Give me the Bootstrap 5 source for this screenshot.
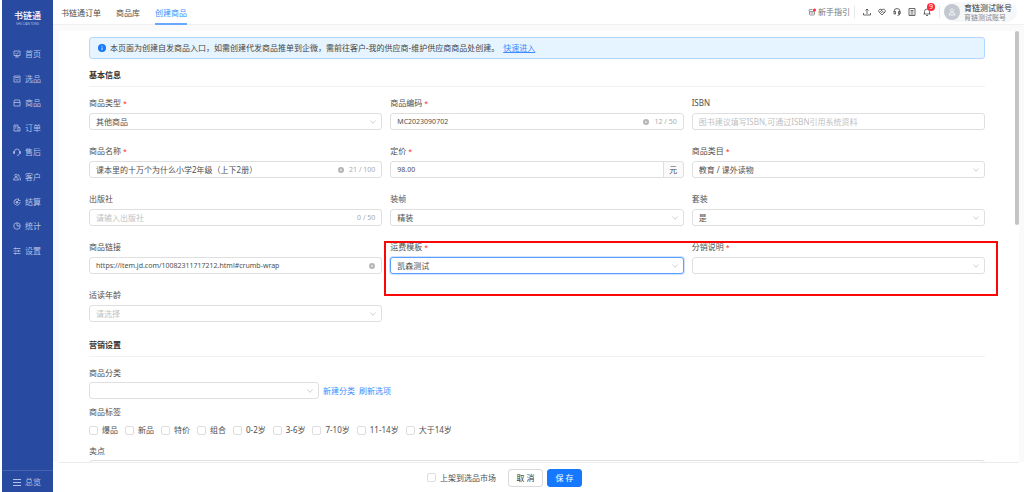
<!DOCTYPE html>
<html lang="zh-CN">
<head>
<meta charset="utf-8">
<meta name="viewport" content="width=device-width, initial-scale=1">
<title>创建商品</title>
<link href="https://cdn.jsdelivr.net/npm/bootstrap@5.3.0/dist/css/bootstrap.min.css" rel="stylesheet">
<style>
:root { --ink:#4f4f4f; --line:#dfdfdf; --brand:#1677ff; }
body { font-family:"Noto Sans","Noto Sans CJK SC",sans-serif; font-size:8px; line-height:12px; color:var(--ink); background:#fff; }
a { color:#3d8bff; text-decoration:none; }
svg { fill:none; stroke:currentColor; display:block; flex:none; }
.side { width:51px; margin-left:2px; background:#284aa0; color:#b4c2e6; }
.side a { color:inherit; gap:4px; padding-left:11px; }
.logo-box { height:42px; padding-top:10px; color:#fff; }
.logo-name { font-size:9px; line-height:12px; font-weight:500; }
.logo-sub { font-size:3px; line-height:4px; color:#b4c2e6; }
.side-menu { display:grid; grid-auto-rows:1fr; height:221px; }
.side-foot { height:22px; border-top:1px solid #4663ae; color:#d5def2; }
.topbar { height:25px; border-bottom:1px solid #f0f0f0; padding:0 7px 0 8px; }
.tabs { gap:15px; }
.tabs a { color:var(--ink); line-height:25px; height:25px; border-bottom:2px solid transparent; }
.tabs a.active { color:#3d8bff; border-color:#69a8ff; }
.guide { gap:2px; color:#777; }
.tools { gap:7px; }
.tool { background:none; border:0; padding:0; color:#444; }
.vline { width:1px; height:12px; background:#e8e8e8; }
.dot { position:absolute; left:4px; top:-5px; width:8px; height:8px; border-radius:4px; background:#ff2638; color:#fff; font-size:7px; line-height:8px; text-align:center; }
.user { background:#f6f7f9; border-radius:10px; height:20px; padding-right:5px; gap:4px; color:#333; line-height:10px; }
.user-sub { font-size:7px; line-height:9px; color:#888; }
.avatar { width:16px; height:16px; border-radius:8px; background:#c3c7cf; color:#eef0f3; }
.stage { background:#fafafa; padding:6px 5px 0 6px; }
.panel { background:#fff; }
.sheet { padding:6px 34px 0 30px; }
.tip { height:22px; border:1px solid #b3d7ff; border-radius:3px; background:#e6f4ff; padding:0 8px; gap:4px; margin-bottom:10px; color:#444; }
.tip a { text-decoration:underline; }
.sec { font-size:8px; line-height:12px; font-weight:700; color:#333; padding-bottom:5px; margin:2px 0 10px; border-bottom:1px solid #f2f2f2; }
.tip + .sec { margin-top:0; }
.fields { --bs-gutter-x:8px; }
.cell { height:48px; }
.cell label { display:block; line-height:12px; margin-bottom:4px; }
.lab { display:block; line-height:12px; margin-bottom:3px; }
.need::after { content:"*"; color:#ff2a2a; margin-left:2px; font-size:7px; line-height:1px; }
.ctl { display:flex; align-items:center; width:100%; height:17px; border:1px solid var(--line); border-radius:3px; background:#fff; color:var(--ink); font-size:8px; line-height:13px; padding:0 6px; }
.ctl input { flex:1; min-width:0; border:0; padding:0; height:15px; background:none; color:inherit; outline:0; line-height:15px; }
.ctl input::placeholder, input.ctl::placeholder { color:#bfbfbf; opacity:1; }
.latin { font-size:7px; }
select.ctl { appearance:none; background:#fff url("data:image/svg+xml,%3Csvg xmlns='http://www.w3.org/2000/svg' viewBox='0 0 6 4'%3E%3Cpath d='M.5.5 3 3.3 5.5.5' fill='none' stroke='%23bbb' stroke-width='.7'/%3E%3C/svg%3E") no-repeat right 5px center/6px 4px; }
select.empty { color:#bfbfbf; }
select.hot { border-color:#5b9fff; box-shadow:0 0 0 1px #cfe3ff; outline:0; }
.count { color:#aaa; margin-left:5px; }
.clr { width:6px; height:6px; color:#b5b5b5; }
.unit { width:21px; height:17px; padding:0; flex:none; justify-content:center; border:1px solid var(--line); background:#fafafa; font-size:8px; border-radius:3px; color:var(--ink); }
.frame { position:absolute; z-index:2; pointer-events:none; left:calc(33.333% - 4px); right:-13px; top:0; height:55px; border:2px solid #fa0808; }
.cat { max-width:230px; }
.cat-row { gap:4px; margin-bottom:7px; }
.tick { appearance:none; width:9px; height:9px; margin:0; border:1px solid #dedede; border-radius:2px; background:#fff; }
.pick { gap:4px; }
.tags { gap:7px; padding-top:3px; margin-bottom:9px; }
.bar { position:absolute; right:0; top:0; width:4px; height:194px; border-radius:2px; background:#c4c4c4; }
.foot { height:30px; background:#fff; border-top:1px solid #ececec; margin:0 5px 0 6px; padding-right:69px; }
.act { height:18px; width:35px; padding:0; font-size:8px; line-height:14px; border-radius:3px; }
.act-save { background:var(--brand); border-color:var(--brand); color:#fff; }
.act-cancel { background:#fff; border-color:#d9d9d9; color:#333; }
</style>
</head>
<body>
<div class="d-flex vh-100 overflow-hidden">
  <aside class="side d-flex flex-column flex-shrink-0">
    <div class="logo-box text-center"><div class="logo-name">书链通</div><div class="logo-sub">SHU LIAN TONG</div></div>
    <nav class="side-menu">
      <a href="#" class="d-flex align-items-center"><svg width="8" height="8" viewBox="0 0 16 16" stroke-width="1.6"><path d="M2 2h12v9H2zM4 14h8M8 11v3M5 7l2 1 4-3"/></svg>首页</a>
      <a href="#" class="d-flex align-items-center"><svg width="8" height="8" viewBox="0 0 16 16" stroke-width="1.6"><path d="M2 2h12v12H2zM4 5h8M5 8l3 3 3-3"/></svg>选品</a>
      <a href="#" class="d-flex align-items-center"><svg width="8" height="8" viewBox="0 0 16 16" stroke-width="1.6"><path d="M3 2h10l1 4v8H2V6zM2 7h12"/></svg>商品</a>
      <a href="#" class="d-flex align-items-center"><svg width="8" height="8" viewBox="0 0 16 16" stroke-width="1.6"><path d="M2 2h8v12H2zM10 7h4v7h-4M4 5h3M4 8h3"/></svg>订单</a>
      <a href="#" class="d-flex align-items-center"><svg width="8" height="8" viewBox="0 0 16 16" stroke-width="1.6"><path d="M3 10V7a5 5 0 0 1 10 0v3M1 7h2v4H1zM13 7h2v4h-2zM13 11q-1 4-5 4"/></svg>售后</a>
      <a href="#" class="d-flex align-items-center"><svg width="8" height="8" viewBox="0 0 16 16" stroke-width="1.6"><circle cx="6" cy="5" r="2.5"/><path d="M1 14q0-5 5-5t5 5zM10 3q3 0 2 4 3 2 3 7h-2"/></svg>客户</a>
      <a href="#" class="d-flex align-items-center"><svg width="8" height="8" viewBox="0 0 16 16" stroke-width="1.6"><path d="M14 8a6 6 0 1 1-3-5M11 1v4h4M5 5l3 3 3-3M5 9h6M8 8v4"/></svg>结算</a>
      <a href="#" class="d-flex align-items-center"><svg width="8" height="8" viewBox="0 0 16 16" stroke-width="1.6"><circle cx="8" cy="8" r="6.5"/><path d="M8 2v6h6"/></svg>统计</a>
      <a href="#" class="d-flex align-items-center"><svg width="8" height="8" viewBox="0 0 16 16" stroke-width="1.6"><path d="M1 3h14M1 8h14M1 13h14M5 1v4M11 6v4M5 11v4"/></svg>设置</a>
    </nav>
    <a href="#" class="side-foot d-flex align-items-center mt-auto"><svg width="8" height="8" viewBox="0 0 8 8" stroke-width="1"><path d="M0 1.5h8M0 4.5h8M0 7.5h8"/></svg>总览</a>
  </aside>

  <div class="d-flex flex-column flex-grow-1 overflow-hidden">
    <header class="topbar d-flex align-items-center justify-content-between">
      <nav class="tabs d-flex"><a href="#">书链通订单</a><a href="#">商品库</a><a href="#" class="active">创建商品</a></nav>
      <div class="d-flex align-items-center">
        <a href="#" class="guide d-flex align-items-center"><svg width="8" height="8" viewBox="0 0 16 16" stroke-width="1.6" stroke="#555"><path d="M9 3H4Q2 3 2 5t2 2h9M3 7v5q0 2 2 2h6q2 0 2-2V8M5 10h6"/><circle cx="13" cy="4" r="3" fill="#ff2638" stroke="none"/></svg>新手指引</a>
        <span class="vline mx-1"></span>
        <div class="tools d-flex align-items-center mx-1">
          <button class="tool" aria-label="上传"><svg width="8" height="8" viewBox="0 0 16 16" stroke-width="1.6"><path d="M8 12V2M5 5l3-3 3 3M1 10v4h14v-4"/></svg></button>
          <button class="tool" aria-label="合作"><svg width="8" height="8" viewBox="0 0 16 16" stroke-width="1.6"><path d="M8 14 2 8Q0 5 3 3t5 1q2-3 5-1t1 5zM8 4 5 7l2 2 3-2 3 3"/></svg></button>
          <button class="tool" aria-label="客服"><svg width="8" height="8" viewBox="0 0 16 16" stroke-width="1.6"><path d="M2 8V7a6 6 0 0 1 12 0v3q0 5-5 5M2 7h3v5H2zM11 7h3v5h-3z"/></svg></button>
          <button class="tool" aria-label="文档"><svg width="8" height="8" viewBox="0 0 16 16" stroke-width="1.6"><path d="M2 1h12v14H2zM5 5h6M5 8h6M5 12h6"/></svg></button>
          <button class="tool position-relative" aria-label="通知"><svg width="8" height="8" viewBox="0 0 16 16" stroke-width="1.6"><path d="M1 12h14M3 12V7a5 5 0 0 1 10 0v5M6 15h4"/></svg><span class="dot">9</span></button>
        </div>
        <span class="vline mx-1"></span>
        <div class="user d-flex align-items-center"><span class="avatar d-flex align-items-center justify-content-center"><svg width="8" height="8" viewBox="0 0 16 16" stroke-width="2"><circle cx="8" cy="5" r="3"/><path d="M2 14q0-5 6-5t6 5z"/></svg></span><div><div>育链测试账号</div><div class="user-sub">育链测试账号</div></div></div>
      </div>
    </header>

    <main class="stage flex-grow-1 overflow-hidden">
      <div class="panel position-relative h-100">
        <form class="sheet" id="goods">
          <div class="tip d-flex align-items-center"><svg width="8" height="8" viewBox="0 0 16 16"><circle cx="8" cy="8" r="8" fill="#1677ff" stroke="none"/><path d="M8 7v5M8 3.5v2" stroke="#fff" stroke-width="1.8"/></svg><span>本页面为创建自发商品入口，如需创建代发商品推单到企微，需前往客户-我的供应商-维护供应商商品处创建。</span><a href="#">快速进入</a></div>
          <h2 class="sec">基本信息</h2>
          <div class="row fields">
            <div class="col-4 cell"><label for="f1" class="need">商品类型</label><select id="f1" class="ctl"><option>其他商品</option></select></div>
            <div class="col-4 cell"><label for="f2" class="need">商品编码</label><div class="ctl"><input id="f2" class="latin" value="MC2023090702"><svg class="clr" viewBox="0 0 12 12"><circle cx="6" cy="6" r="6" fill="currentColor" stroke="none"/><path d="m4 4 4 4m0-4L4 8" stroke="#fff"/></svg><span class="count latin">12 / 50</span></div></div>
            <div class="col-4 cell"><label for="f3">ISBN</label><input id="f3" class="ctl" placeholder="图书建议填写ISBN,可通过ISBN引用系统资料"></div>
            <div class="col-4 cell"><label for="f4" class="need">商品名称</label><div class="ctl"><input id="f4" value="课本里的十万个为什么小学2年级（上下2册）"><svg class="clr" viewBox="0 0 12 12"><circle cx="6" cy="6" r="6" fill="currentColor" stroke="none"/><path d="m4 4 4 4m0-4L4 8" stroke="#fff"/></svg><span class="count latin">21 / 100</span></div></div>
            <div class="col-4 cell"><label for="f5" class="need">定价</label><div class="input-group flex-nowrap"><input id="f5" class="ctl latin" value="98.00"><span class="input-group-text unit">元</span></div></div>
            <div class="col-4 cell"><label for="f6" class="need">商品类目</label><select id="f6" class="ctl"><option>教育 / 课外读物</option></select></div>
            <div class="col-4 cell"><label for="f7">出版社</label><div class="ctl"><input id="f7" placeholder="请输入出版社"><span class="count latin">0 / 50</span></div></div>
            <div class="col-4 cell"><label for="f8">装帧</label><select id="f8" class="ctl"><option>精装</option></select></div>
            <div class="col-4 cell"><label for="f9">套装</label><select id="f9" class="ctl"><option>是</option></select></div>
          </div>
          <div class="position-relative">
            <div class="row fields">
              <div class="col-4 cell"><label for="f10">商品链接</label><div class="ctl"><input id="f10" class="latin" value="https://item.jd.com/10082311717212.html#crumb-wrap"><svg class="clr" viewBox="0 0 12 12"><circle cx="6" cy="6" r="6" fill="currentColor" stroke="none"/><path d="m4 4 4 4m0-4L4 8" stroke="#fff"/></svg></div></div>
              <div class="col-4 cell"><label for="f11" class="need">运费模板</label><select id="f11" class="ctl hot"><option>凯森测试</option></select></div>
              <div class="col-4 cell"><label for="f12" class="need">分销说明</label><select id="f12" class="ctl"><option></option></select></div>
            </div>
            <div class="frame"></div>
          </div>
          <div class="row fields"><div class="col-4 cell"><label for="f13">适读年龄</label><select id="f13" class="ctl empty"><option>请选择</option></select></div></div>
          <h2 class="sec">营销设置</h2>
          <label for="f14" class="lab">商品分类</label>
          <div class="cat-row d-flex align-items-center"><select id="f14" class="ctl cat"><option></option></select><a href="#">新建分类</a><a href="#">刷新选项</a></div>
          <div class="lab">商品标签</div>
          <div class="tags d-flex">
            <label class="pick d-flex align-items-center"><input type="checkbox" class="tick">爆品</label>
            <label class="pick d-flex align-items-center"><input type="checkbox" class="tick">新品</label>
            <label class="pick d-flex align-items-center"><input type="checkbox" class="tick">特价</label>
            <label class="pick d-flex align-items-center"><input type="checkbox" class="tick">组合</label>
            <label class="pick d-flex align-items-center"><input type="checkbox" class="tick">0-2岁</label>
            <label class="pick d-flex align-items-center"><input type="checkbox" class="tick">3-6岁</label>
            <label class="pick d-flex align-items-center"><input type="checkbox" class="tick">7-10岁</label>
            <label class="pick d-flex align-items-center"><input type="checkbox" class="tick">11-14岁</label>
            <label class="pick d-flex align-items-center"><input type="checkbox" class="tick">大于14岁</label>
          </div>
          <label for="f15" class="lab">卖点</label>
          <input id="f15" class="ctl">
        </form>
        <div class="bar"></div>
      </div>
    </main>
    <footer class="foot d-flex align-items-center justify-content-center flex-shrink-0 gap-1">
      <label class="pick d-flex align-items-center me-2"><input type="checkbox" class="tick">上架到选品市场</label>
      <button type="button" class="btn act act-cancel">取 消</button>
      <button type="submit" form="goods" class="btn act act-save">保 存</button>
    </footer>
  </div>
</div>
<script src="https://cdn.jsdelivr.net/npm/bootstrap@5.3.0/dist/js/bootstrap.bundle.min.js"></script>
</body>
</html>
